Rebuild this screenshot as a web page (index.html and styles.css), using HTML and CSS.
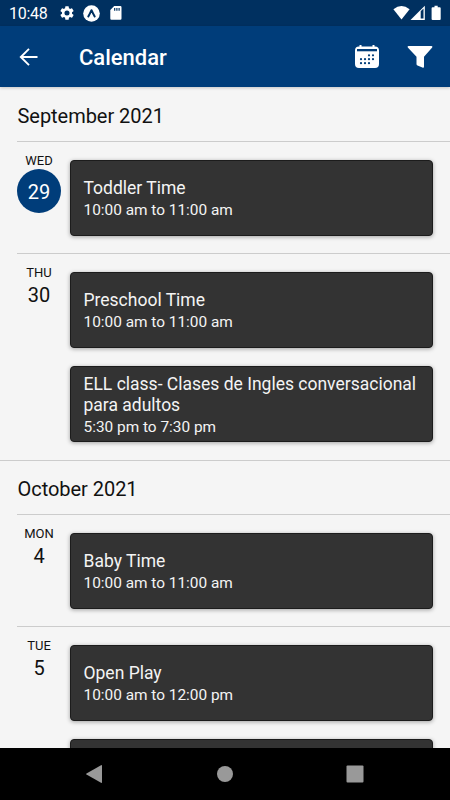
FILE: index.html
```html
<!DOCTYPE html>
<html lang="en">
<head>
    <meta charset="UTF-8">
    <meta name="viewport" content="width=device-width, initial-scale=1.0">
    <title>Calendar</title>
    <link rel="stylesheet" href="styles.css">
</head>
<body>
    <div class="status-bar">
        <span class="clock">10:48</span>
        <svg class="gear" width="14" height="14" viewBox="2 2 20 20" fill="#fff"><path d="M19.14 12.94c.04-.3.06-.61.06-.94s-.02-.64-.07-.94l2.03-1.58a.49.49 0 0 0 .12-.61l-1.92-3.32a.49.49 0 0 0-.59-.22l-2.39.96a7 7 0 0 0-1.62-.94l-.36-2.54a.48.48 0 0 0-.48-.41h-3.84a.47.47 0 0 0-.47.41l-.36 2.54c-.59.24-1.13.57-1.62.94l-2.39-.96a.48.48 0 0 0-.59.22L2.74 8.87a.47.47 0 0 0 .12.61l2.03 1.58a6 6 0 0 0 0 1.88l-2.03 1.58a.49.49 0 0 0-.12.61l1.92 3.32c.12.22.37.29.59.22l2.39-.96c.5.38 1.03.7 1.62.94l.36 2.54c.05.24.24.41.48.41h3.84c.24 0 .44-.17.47-.41l.36-2.54a7 7 0 0 0 1.62-.94l2.39.96c.22.08.47 0 .59-.22l1.92-3.32a.47.47 0 0 0-.12-.61zM12 15.6a3.6 3.6 0 1 1 0-7.2 3.6 3.6 0 0 1 0 7.2z"/></svg>
        <svg class="expo" width="17" height="17" viewBox="0 0 17 17"><circle cx="8.5" cy="8.5" r="8.3" fill="#fff"/><path d="M5.300 11.500C6.500 9.500 7.500 7.500 8.500 5.200c1 2.300 2 4.300 3.200 6.300" fill="none" stroke="#003060" stroke-width="2" stroke-linecap="round" stroke-linejoin="round"/></svg>
        <svg class="sd" width="12" height="14" viewBox="0 0 12 14"><path fill="#fff" fill-rule="evenodd" d="M4.200 0H10.400Q11.500 0 11.500 1.200V12.600Q11.500 13.800 10.400 13.800H1.400Q.3 13.800 .3 12.600V4zM4.100 2V4.800H5.300V2zM6.300 2V4.800H7.500V2zM8.500 2V4.800H9.700V2z"/></svg>
        <svg class="signals" width="50" height="16" viewBox="0 0 50 16">
            <path fill="#fff" d="M8.500 14.500.4 4.200Q8.500-2.300 16.600 4.200z"/>
            <path fill="#fff" d="M17.500 15 31.800.8V15z"/>
            <path fill="#003060" d="M27.700 6.300 30.500 3.600V13.500H27.700z"/>
            <path fill="#fff" d="M41.500.8h3.200v1.500h2q1 0 1 1v10.600q0 1-1 1h-7.100q-1 0-1-1V3.300q0-1 1-1h1.900z"/>
        </svg>
    </div>

    <header class="app-bar">
        <svg class="back" width="20" height="20" viewBox="0 0 20 20" fill="none" stroke="#fff" stroke-width="1.900"><path d="M18.500 10H2.500M10 1.800 1.800 10l8.200 8.200"/></svg>
        <h1 class="title">Calendar</h1>
        <svg class="calendar-icon" width="26" height="26" viewBox="0 0 26 26">
            <path fill="#fff" d="M5.500 1H7.500V2.500H18.500V1H20.500V2.500H21Q25 2.500 25 6.500V20Q25 24 21 24H5Q1 24 1 20V6.500Q1 2.500 5 2.500H5.500z"/>
            <path fill="#003d7a" d="M3 5h20v2.300H3z"/>
            <path stroke="#003d7a" stroke-width="2.200" stroke-linecap="round" fill="none" d="M15 11.300h0M19 11.300h0M7 15.200h0M11 15.200h0M15 15.200h0M19 15.200h0M7 19.200h0M11 19.200h0M15 19.200h0"/>
        </svg>
        <svg class="filter-icon" width="26" height="24" viewBox="0 0 26 24"><path fill="#fff" d="M1.500 1H24.500Q26 1 25.200 2.600L17 11.800V21.500Q17 23.200 15.400 22.500L10.500 20.500Q9.500 20 9.500 19V11.800L.8 2.600Q0 1 1.500 1z"/></svg>
    </header>

    <main class="agenda">
        <section class="month">
            <h2 class="month-name">September 2021</h2>
            <div class="day">
                <div class="date today">
                    <span class="weekday">WED</span>
                    <span class="number">29</span>
                </div>
                <div class="events">
                    <div class="event">
                        <div class="name">Toddler Time</div>
                        <div class="time">10:00 am to 11:00 am</div>
                    </div>
                </div>
            </div>
            <div class="day last">
                <div class="date">
                    <span class="weekday">THU</span>
                    <span class="number">30</span>
                </div>
                <div class="events">
                    <div class="event">
                        <div class="name">Preschool Time</div>
                        <div class="time">10:00 am to 11:00 am</div>
                    </div>
                    <div class="event">
                        <div class="name">ELL class- Clases de Ingles conversacional para adultos</div>
                        <div class="time">5:30 pm to 7:30 pm</div>
                    </div>
                </div>
            </div>
        </section>
        <section class="month">
            <h2 class="month-name">October 2021</h2>
            <div class="day">
                <div class="date">
                    <span class="weekday">MON</span>
                    <span class="number">4</span>
                </div>
                <div class="events">
                    <div class="event">
                        <div class="name">Baby Time</div>
                        <div class="time">10:00 am to 11:00 am</div>
                    </div>
                </div>
            </div>
            <div class="day">
                <div class="date">
                    <span class="weekday">TUE</span>
                    <span class="number">5</span>
                </div>
                <div class="events">
                    <div class="event">
                        <div class="name">Open Play</div>
                        <div class="time">10:00 am to 12:00 pm</div>
                    </div>
                    <div class="event"></div>
                </div>
            </div>
        </section>
    </main>

    <nav class="nav-bar">
        <svg width="18" height="20" viewBox="0 0 18 20"><path fill="#999" d="M16 1.200Q17 .7 17 1.800V18.200Q17 19.300 16 18.800L1.500 10.600Q.6 10 1.500 9.400z"/></svg>
        <svg width="18" height="18" viewBox="0 0 18 18"><circle cx="9" cy="9" r="8" fill="#999"/></svg>
        <svg width="18" height="18" viewBox="0 0 18 18"><rect x=".5" y=".5" width="17" height="17" rx="1" fill="#999"/></svg>
    </nav>
</body>
</html>
```

FILE: styles.css
```css
* {
    box-sizing: border-box;
}
body {
    margin: 0;
    height: 800px;
    display: flex;
    flex-direction: column;
    overflow: hidden;
    background-color: #f5f5f5;
    font-family: Roboto, sans-serif;
    color: #111;
}
svg {
    display: block;
    flex: none;
}
.status-bar {
    height: 26px;
    flex: none;
    display: flex;
    align-items: center;
    padding: 0 7px 0 9px;
    background-color: #003060;
    color: #fff;
}
.clock {
    width: 51px;
    padding-top: 1px;
    font-size: 16px;
    letter-spacing: -0.3px;
}
.expo {
    margin-left: 9px;
}
.sd {
    margin-left: 10px;
}
.signals {
    margin-left: auto;
    margin-right: 0;
}
.app-bar {
    height: 61px;
    flex: none;
    display: flex;
    align-items: center;
    padding: 0 17px 0 19px;
    background-color: #003d7a;
    color: #fff;
    box-shadow: 0 1px 3px rgba(0, 0, 0, 0.2);
    z-index: 1;
}
.title {
    margin: 2px auto 0 40px;
    font-size: 22px;
    font-weight: 500;
}
.filter-icon {
    margin-left: 27px;
}
.agenda {
    flex: 1;
    min-height: 0;
    overflow: hidden;
}
.month + .month {
    border-top: 1px solid #ccc;
}
.month-name {
    margin: 0;
    height: 54px;
    padding: 3px 17.5px 0;
    font-size: 20px;
    font-weight: 400;
    line-height: 52px;
    letter-spacing: -0.04px;
}
.month + .month .month-name {
    height: 53px;
    padding-top: 2px;
}
.day {
    display: flex;
    margin-left: 17px;
    padding: 18px 17.5px 17px 0;
    border-top: 1px solid #ccc;
}
.day.last {
    padding-bottom: 18px;
}
.date {
    width: 44px;
    margin: -7px 9px 0 0;
    display: flex;
    flex-direction: column;
    align-items: center;
}
.weekday {
    font-size: 13px;
    line-height: 16px;
}
.number {
    width: 44px;
    height: 44px;
    border-radius: 50%;
    font-size: 20px;
    line-height: 28px;
    text-align: center;
}
.today .number {
    background-color: #003d7a;
    color: #fff;
    line-height: 46px;
}
.events {
    flex: 1;
    display: flex;
    flex-direction: column;
    gap: 18px;
}
.event {
    height: 76px;
    display: flex;
    flex-direction: column;
    justify-content: center;
    padding: 3px 13px 0 12.5px;
    border: 1px solid #1c1c1c;
    border-radius: 4px;
    background-color: #333;
    color: #f4f4f4;
    box-shadow: 0 1px 4px rgba(0, 0, 0, 0.35);
}
.name {
    font-size: 17.5px;
    line-height: 21px;
}
.time {
    padding-top: 1px;
    font-size: 15.4px;
    line-height: 21px;
}
.nav-bar {
    height: 52px;
    flex: none;
    display: flex;
    align-items: center;
    justify-content: space-between;
    padding: 0 86px 0 85px;
    background-color: #000;
}
```
